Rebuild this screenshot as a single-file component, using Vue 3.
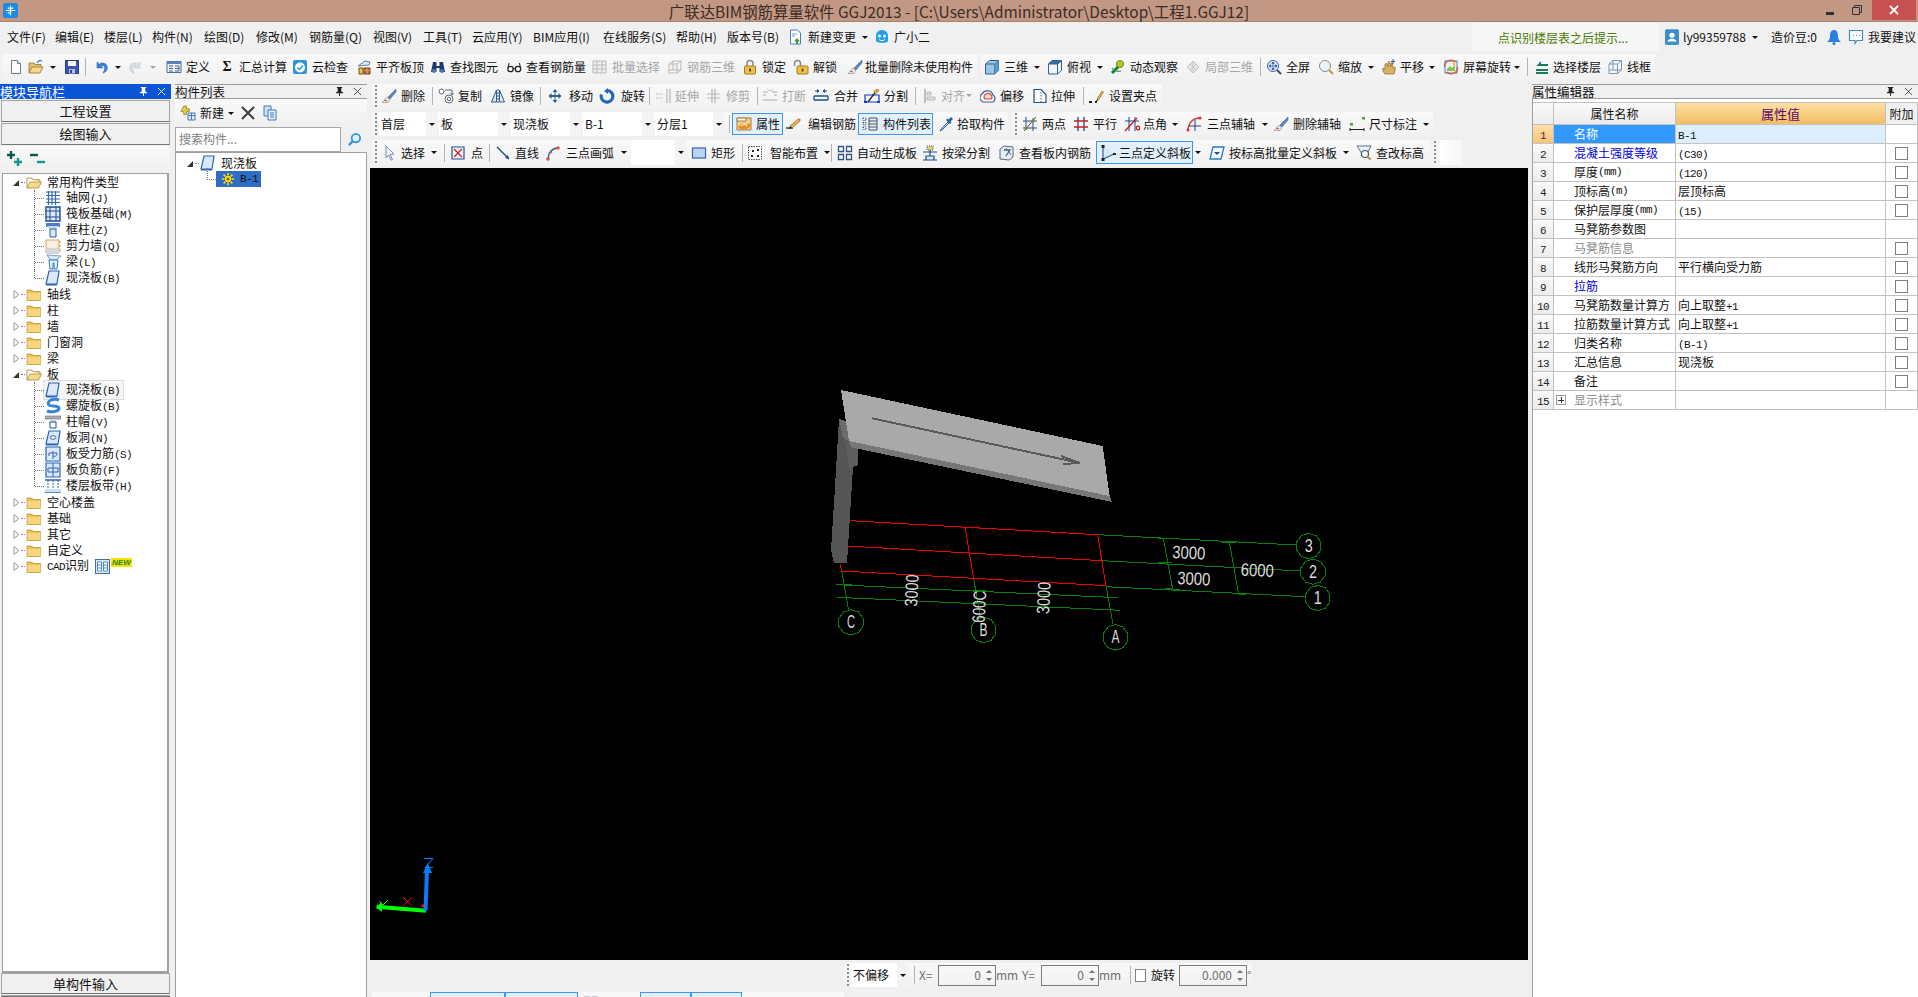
<script setup>
const folderBody = '<path d="M1 4h5l1 1.500h7.500v9H1z" fill="#f2c04e" stroke="#b08a3a" stroke-width=".7"/><path d="M1.500 7h13v7h-13z" fill="#f7d77e"/>'
const ic = {
  doc: '<path d="M3.500 1.500h6l3 3v10h-9z" fill="#fff" stroke="#6b7b90"/><path d="M9.500 1.500v3h3" fill="#dfe6ef" stroke="#6b7b90"/>',
  open: '<path d="M1 14V4h5l1 1.500h6V8" fill="#e8c26a" stroke="#a8864a"/><path d="M1 14l3-6h11l-3 6z" fill="#f6d88a" stroke="#a8864a"/><path d="M9 4c1-2 3-3 5-2" fill="none" stroke="#4a86c8" stroke-width="1.300"/>',
  save: '<path d="M1.500 1.500h13v13h-13z" fill="#3d55b0" stroke="#243a80"/><path d="M4 2h8v5H4z" fill="#f4f4f4"/><path d="M5 10h6v4.500H5z" fill="#b8c4dc"/><path d="M6 11h2v3H6z" fill="#34497a"/>',
  undo: '<path d="M4 3v6h6L8 7c3-1 4 1 3.500 3.500L10 14c4-1 5.500-5 3.500-8C12 3.500 8 3.500 6.500 5z" fill="#3a80d8" stroke="#2a62b0" stroke-width=".5"/>',
  redo: '<path d="M12 3v6H6l2-2c-3-1-4 1-3.500 3.500L6 14c-4-1-5.500-5-3.500-8C4 3.500 8 3.500 9.500 5z" fill="#d9dde2" stroke="#bcc2c9" stroke-width=".5"/>',
  calc: '<path d="M1 2.500h14v11H1z" fill="#eef3fa" stroke="#4a6a9a"/><path d="M1 2.500h14v2.500H1z" fill="#5c82bc"/><path d="M3 7h4M3 9.500h4M3 12h4M9 7h4v5H9M9 9.500h4" fill="none" stroke="#44608c"/>',
  cloud: '<rect x="1" y="1" width="14" height="14" rx="2" fill="#2f94dd"/><circle cx="8" cy="8.500" r="5" fill="#fff"/><path d="M5.500 8.500l2 2 3.500-4" fill="none" stroke="#2f94dd" stroke-width="1.500"/>',
  aligntop: '<path d="M2 7l7-5 5 1-1 3z" fill="#dfe6ef" stroke="#6a7f9a"/><path d="M3 9h4v6H3z" fill="#f3c638" stroke="#6a5214"/><path d="M8 9h6v6H8z" fill="#b86a3a" stroke="#7a3f1a"/><path d="M8 11.500h6M11 9v6" stroke="#e2b48a" stroke-width=".7"/>',
  bino: '<path d="M3 3h3.500v4H9.500V3H13l2 10h-5.500V9h-3v4H1z" fill="#1f3a6a"/><circle cx="4" cy="12" r="2" fill="#4a78ba"/><circle cx="12" cy="12" r="2" fill="#4a78ba"/>',
  glasses: '<circle cx="4.500" cy="10" r="2.700" fill="#fff" stroke="#222" stroke-width="1.300"/><circle cx="12" cy="10" r="2.700" fill="#fff" stroke="#222" stroke-width="1.300"/><path d="M2 9l1-5M14.500 9l-1-5M7 9.500h2.500" fill="none" stroke="#222"/>',
  gridg: '<path d="M1 2h13v12H1zM1 6h13M1 10h13M5 2v12M10 2v12" fill="#efefef" stroke="#b9b9b9"/>',
  rebar3: '<path d="M2 5l4-3h8v9l-4 3H2zM2 5h8v9M10 5l4-3M6 2v9H2M6 11h8" fill="none" stroke="#b9b9b9"/>',
  lock: '<path d="M5 7V4.500a3 3 0 0 1 6 0V7" fill="none" stroke="#8a8a8a" stroke-width="1.500"/><rect x="2.500" y="7" width="11" height="8" rx="1" fill="#ecc24e" stroke="#a37c1c"/><rect x="7" y="9.500" width="2" height="3" fill="#6d4c0a"/>',
  unlock: '<path d="M1.500 7V4.500a3 3 0 0 1 6 0V7" fill="none" stroke="#8a8a8a" stroke-width="1.500"/><rect x="4" y="7" width="11" height="8" rx="1" fill="#ecc24e" stroke="#a37c1c"/><rect x="8.500" y="9.500" width="2" height="3" fill="#6d4c0a"/>',
  brush: '<path d="M15 1L7 9l2 2 6-7z" fill="#5f86c6" stroke="#34568c" stroke-width=".5"/><path d="M6 9l3 3-2 2.500H1c2-1 2-3 5-5.500z" fill="#efe6d4" stroke="#888" stroke-width=".6"/><path d="M3 12l3 1" stroke="#c84a5a"/>',
  cube: '<path d="M1.500 5l4-3.500h9v10l-4 3.500h-9z" fill="#9cc6e8" stroke="#2e5f8e"/><path d="M1.500 5h9v10M10.500 5l4-3.500" fill="none" stroke="#2e5f8e"/><path d="M10.500 5l4-3.500v10l-4 3.500z" fill="#5e9bcf"/>',
  topv: '<path d="M1.500 5l4-3.500h9v10l-4 3.500h-9z" fill="#f1f5fb" stroke="#3c5f8c"/><path d="M1.500 5l4-3.500h9L10.500 5z" fill="#2f6db0" stroke="#3c5f8c"/><path d="M10.500 5v10M10.500 5l4-3.500" stroke="#3c5f8c"/>',
  orbit: '<circle cx="10" cy="5" r="3.500" fill="#b6cc22" stroke="#738400"/><path d="M8 8L2 14" stroke="#1e7a3c" stroke-width="3"/><path d="M2 9c2 3 6 4 9 3" fill="none" stroke="#28a050" stroke-width="1.200"/>',
  part3: '<path d="M2 8l6-6 6 6-6 6z" fill="#e6e6e6" stroke="#c2c2c2"/><path d="M5 5l6 6M11 5l-6 6M8 2v12" stroke="#c9c9c9"/>',
  full: '<circle cx="7" cy="7" r="5.500" fill="#d6e6f8" stroke="#4668a0"/><path d="M11 11l4 4" stroke="#3a4f78" stroke-width="2"/><path d="M7 3v8M3 7h8M7 3L5.800 4.500h2.400zM7 11l-1.200-1.500h2.400zM3 7l1.500-1.200v2.400zM11 7L9.500 5.800v2.400z" fill="#30508c" stroke="#30508c" stroke-width=".6"/>',
  zoom: '<circle cx="7" cy="7" r="5.500" fill="#eef2f6" stroke="#7f8c9c"/><path d="M11 11l4 4" stroke="#c89a30" stroke-width="2.200"/><path d="M3.500 6a4 4 0 0 1 4-3" fill="none" stroke="#fff" stroke-width="1.400"/>',
  pan: '<path d="M4 15c-2-2-3-5-2-6l2 1V5l1.500-.5L7 8V3l1.500-.5L10 8V4l1.500 0 .5 5 1.500-1 1 1-1.500 6z" fill="#d8b264" stroke="#8c6c2a" stroke-width=".7"/><path d="M12 0v5M10 2.500h4" stroke="#3c5a8c"/>',
  rot: '<rect x="2" y="2" width="12" height="12" fill="#e7f1fa" stroke="#4a82b8"/><path d="M4 10l3-3 2 2 3-3v6H4z" fill="#8cc04a"/><circle cx="11" cy="5" r="1.400" fill="#f0c230"/><path d="M1.500 8a6.500 6.500 0 0 1 11-5M14.500 8a6.500 6.500 0 0 1-11 5" fill="none" stroke="#e04a3a" stroke-width="1.300"/>',
  floors: '<path d="M2 7l5-4v2h7v2H2zM2 10h12v2H2zM2 13h12v2H2z" fill="#1c7a5e"/><path d="M5 5l2-2" stroke="#2e63b8" stroke-width="1.500"/>',
  wire: '<path d="M2 5l4-3.500h8.500v9.500l-4 3.500H2zM2 5h8.500v9.500M10.500 5l4-3.500M6 1.500V11H2M6 11h8.500" fill="#f7f9fc" fill-opacity=".6" stroke="#7f96ae"/>',
  copy: '<circle cx="3.500" cy="3.500" r="2.500" fill="#fff" stroke="#5f6a78"/><circle cx="11" cy="11" r="4" fill="#fff" stroke="#5f6a78"/><circle cx="11" cy="11" r="1.800" fill="none" stroke="#5f6a78"/><path d="M7 2h7v5M14 7l-1.500-2M14 7l1.500-2" fill="none" stroke="#5f6a78"/>',
  mirror: '<path d="M6.500 2L1.500 14h5zM9.500 2l5 12h-5z" fill="#dbe7f4" stroke="#33588c"/><path d="M8 1v14" stroke="#33588c" stroke-dasharray="2 1"/>',
  move: '<path d="M8 1l2.500 3h-2v3h3V5l3 3-3 3V9h-3v3h2L8 15l-2.500-3h2V9h-3v2l-3-3 3-3v2h3V4h-2z" fill="#2a5f96"/>',
  spin: '<path d="M8 2.500a5.800 5.800 0 1 1-5.500 4" fill="none" stroke="#2668c0" stroke-width="3.200"/><path d="M9 0v6L5 3z" fill="#2668c0"/>',
  extend: '<path d="M1 6h7M1 10h7" stroke="#bbb" stroke-dasharray="2 1"/><path d="M12 1v14M15 1v14" stroke="#bbb" stroke-width="1.300"/>',
  trim: '<path d="M1 6h13M1 10h13" stroke="#bbb"/><path d="M6 1v14M9 1v14" stroke="#bbb" stroke-width="1.300"/>',
  brk: '<path d="M1 4h5M1 7h3M10 4h5M12 7h3M1 12h14" stroke="#c4c4c4" stroke-width="1.300"/><path d="M5 1l3 2 3-2" fill="none" stroke="#c4c4c4"/>',
  merge: '<path d="M1 8h14M1 12h14M1 8v4M15 8v4" fill="none" stroke="#1f4f8a" stroke-width="1.300"/><path d="M2 3h4M10 3h4M6 3L4.500 1.500V4.500zM10 3l1.500-1.500V4.500z" fill="#1f4f8a" stroke="#1f4f8a"/>',
  split: '<path d="M1 7h14v7H1z" fill="none" stroke="#1438c8" stroke-width="1.200"/><path d="M4 14l9-12" stroke="#222" stroke-width="1.300"/><path d="M10 3l4-2 1 2-4 3z" fill="#e3b040" stroke="#7a5c14" stroke-width=".5"/><path d="M0 13h3v2H0zM13 13h3v2h-3z" fill="#1438c8"/>',
  align: '<path d="M2 1v14" stroke="#aaa" stroke-width="1.500"/><path d="M4 4h4v3H4zM4 9h8v3H4z" fill="#ddd" stroke="#bbb"/>',
  offset: '<path d="M3 14a4.500 4.500 0 0 1-1-8 6 6 0 0 1 11 1 4 4 0 0 1 0 7z" fill="#fff" stroke="#3a5f92" stroke-width="1.200"/><path d="M5 11a3 3 0 0 1 1-5 3.500 3.500 0 0 1 5 1 2.500 2.500 0 0 1 0 4z" fill="#f6d8cc" stroke="#d04a3a" stroke-width="1.200"/>',
  stretch: '<path d="M2 1.500h7l5 5v8H2z" fill="#fff" stroke="#1f4f8a" stroke-width="1.200"/><path d="M9 4v10" stroke="#555" stroke-dasharray="1.500 1.500"/>',
  grips: '<path d="M1 13h3v2H1zM7 13h2v2H7z" fill="#222"/><path d="M9 11l5-8 1.500 1-5 8z" fill="#e8b048" stroke="#7a5c14" stroke-width=".6"/><path d="M10 12l-2 1" stroke="#222"/>',
  prop: '<path d="M1 2h14v12H1z" fill="#f5d08a" stroke="#a8793a"/><path d="M1 2h9v3H1z" fill="#fff" stroke="#a8793a"/><path d="M2 11l5-4 3 2 4-2v4l-3 2H4z" fill="#e88c20"/><path d="M5 10l3-2 3 2" fill="none" stroke="#fff"/>',
  edit: '<path d="M0 12h7" stroke="#222" stroke-width="1.300"/><path d="M4 10l8-7 2 2-8 7z" fill="#eeb050" stroke="#806020" stroke-width=".6"/><path d="M12 3l2 2 1-1-2-2z" fill="#e6707a"/><path d="M4 10l-1 3 3-1" fill="#222"/>',
  list: '<path d="M1 2h3v2.500H1zM1 6.500h3V9H1zM1 11h3v2.500H1z" fill="none" stroke="#444" stroke-dasharray="1 1"/><path d="M7 2h8v12H7zM7 5h8M7 8h8M7 11h8" fill="none" stroke="#555"/>',
  pick: '<path d="M10 6l-6 6-2 3 3-2 6-6z" fill="#cfe4f8" stroke="#2a5f96"/><path d="M8 4l4 4 1.500-1.500-1-1L15 3l-2-2-2.500 2.500-1-1z" fill="#2460a8"/>',
  two: '<path d="M4 1v13M11 2v13M1 5h14M1 12h14" stroke="#2a4a8c"/><path d="M2 15L14 1" stroke="#c81e1e"/><circle cx="4" cy="12" r="1.600" fill="#4aa02c"/><circle cx="11" cy="5" r="1.600" fill="#4aa02c"/>',
  para: '<path d="M5 1v14M11 1v14" stroke="#25408c" stroke-width="1.300"/><path d="M1 5h14M1 11h14" stroke="#c81e1e" stroke-width="1.300"/>',
  angle: '<path d="M5 1v14M11 1v14M1 5h14" stroke="#25408c"/><path d="M1 15L13 2" stroke="#c81e1e" stroke-width="1.300"/><circle cx="14" cy="12" r="1.800" fill="none" stroke="#c81e1e" stroke-width="1.300"/>',
  arcax: '<path d="M2 15C2 7 7 2 14 2" fill="none" stroke="#d8312c" stroke-width="1.300"/><path d="M9 4v11M3 10h12" stroke="#25408c"/><circle cx="2" cy="14" r="1.500" fill="#d8312c"/><circle cx="14" cy="2" r="1.500" fill="#d8312c"/>',
  dim: '<path d="M1 7h3v2.500H1zM13 1h3v2.500h-3z" fill="#47a83a"/><path d="M1 12v3M15 12v3M1 13.500h14" stroke="#222"/>',
  cursor: '<path d="M5 1l8 8-4 .5 2.500 5-1.500.7L7.500 10 5 13z" fill="#f4f7fb" stroke="#7c8ca4"/>',
  point: '<path d="M2 2h12v12H2z" fill="#f0f4fb" stroke="#2a4f8c" stroke-width="1.200"/><path d="M4 4l8 8M12 4l-8 8" stroke="#c81e1e" stroke-width="1.200"/>',
  line: '<path d="M2 2l12 12" stroke="#1f4f8a" stroke-width="1.400"/><path d="M14 14l-4-1 3-3z" fill="#1f4f8a"/>',
  arc: '<path d="M3 14C3 8 7 3 13 3" fill="none" stroke="#2a5f96" stroke-width="1.400"/><circle cx="3" cy="14" r="1.800" fill="#d8553c"/><circle cx="13" cy="3" r="1.800" fill="#d8553c"/><circle cx="6" cy="7" r="1.200" fill="#d8553c"/>',
  rect: '<rect x="1.500" y="3" width="13" height="10" fill="#bcd4f4" stroke="#3a64a8" stroke-width="1.200"/>',
  smart: '<path d="M1.500 1.500h13v13h-13z" fill="#fff" stroke="#555" stroke-dasharray="1.500 1"/><path d="M5 5h2v2H5zM10 4h2v2h-2zM4 10h2v2H4zM10 10h2v2h-2z" fill="#222"/>',
  auto: '<path d="M1.500 1.500h5v5h-5zM9.500 1.500h5v5h-5zM1.500 9.500h5v5h-5zM9.500 9.500h5v5h-5z" fill="#fff" stroke="#34507c" stroke-width="1.300"/>',
  beam: '<path d="M5 1h6v4H5z" fill="#f3d25e" stroke="#2a5f96" stroke-dasharray="1 1"/><path d="M1 7h14M8 5v6M1 15h14M4 11h8v4H4z" fill="#dbe8f8" stroke="#1f4f8a" stroke-width="1.200"/>',
  view: '<path d="M1 4l4-3 9 1v10l-4 3-9-1z" fill="#e8edf2" stroke="#56687c"/><path d="M5 5l6 0-4 6" fill="none" stroke="#3a6a8c" stroke-width="1.300"/><path d="M7 3l5 7" stroke="#56687c"/>',
  three: '<path d="M3 1v13l11-5z" fill="#dbe8f8"/><path d="M3 1v13l11-5" fill="none" stroke="#2a64a8" stroke-width="1.200"/><path d="M1.500 0h3v3h-3zM1.500 13h3v3h-3zM13 8h3v2h-3z" fill="#222"/>',
  batch: '<path d="M4 2h11l-3 12H1z" fill="#f1f7fd" stroke="#2a7bc4" stroke-width="1.300"/><path d="M5 7h6L8 10z" fill="#1f4f8a"/>',
  chk: '<path d="M1 1h14l-4 8H6z" fill="#eaf0f6" stroke="#5f7488"/><circle cx="9" cy="9" r="3.500" fill="#f4f7fb" stroke="#46586c" stroke-width="1.200"/><path d="M11.500 11.500l3 3" stroke="#c88a28" stroke-width="2"/>',
  newc: '<path d="M2.500 1h7l3 3v11h-10z" fill="#fff" stroke="#4c7cb8"/><path d="M9 9l-3 3.500h2V15h2v-2.500h2z" fill="#3aa02c"/><path d="M4 5h5M4 7h3" stroke="#7aa0cc"/>',
  guang: '<path d="M8 1c4 0 6 3 6 6v5c-1 2-2 .5-3 2-1-1.500-2 .5-3 0-1 .5-2-1.500-3 0-1-1.500-2 0-3-2V7c0-3 2-6 6-6z" fill="#24a0e8"/><circle cx="5.500" cy="7" r="1.500" fill="#fff"/><circle cx="10.500" cy="7" r="1.500" fill="#fff"/><path d="M5 10.500c2 1.500 4 1.500 6 0" fill="none" stroke="#fff"/>',
  user: '<rect x="0" y="0" width="16" height="18" rx="2" fill="#3d8fc8"/><circle cx="8" cy="7" r="3" fill="#fff"/><path d="M3 14c0-4 10-4 10 0z" fill="#fff"/>',
  bell: '<path d="M8 1c3 0 4 3 4 6 0 3 1 4 3 6H1c2-2 3-3 3-6 0-3 1-6 4-6z" fill="#2a7fe0"/><circle cx="8" cy="14.500" r="1.500" fill="#2a7fe0"/>',
  chat: '<path d="M1.500 1.500h13v10H9l-2 3v-3H1.500z" fill="#fff" stroke="#3a8ad0" stroke-width="1.200"/><path d="M5 6.500h1M8 6.500h1M11 6.500h1" stroke="#3a8ad0"/>',
  newlist: '<path d="M1 0h4v4h4v4H5v4H1V8H-3z" transform="translate(3 1) scale(.7)" fill="#e8c84a" stroke="#8a7a20"/><path d="M8 8h7v7H8z" fill="#e6effa" stroke="#3d7ac0"/><path d="M8 10.500h7M11.500 8v7" stroke="#3d7ac0"/>',
  cross: '<path d="M2 2l12 12M14 2L2 14" stroke="#3c3c3c" stroke-width="2"/>',
  clone: '<path d="M2 1h7v10H2z" fill="#cfe0f4" stroke="#3d7ac0"/><path d="M6 5h8v10H6z" fill="#e8f0fb" stroke="#3d7ac0"/><path d="M8 8h4M8 10h4M8 12h4" stroke="#3d7ac0"/>',
  folderO: '<path d="M1 4h5l1 1.500h7V8" fill="#e9d49a" stroke="#b09a60" stroke-width=".8"/><path d="M1 14V4" stroke="#b09a60"/><path d="M1 14l3-6h11.500L12.500 14z" fill="#f7dc88" stroke="#a88a3c" stroke-width=".8"/>',
  folderC: folderBody,
  axnet: '<path d="M1 2h14M1 5.500h14M1 9h14M1 12.500h14M3.500 1v14M7 1v14M10.500 1v14" stroke="#3268b4" stroke-width="1.200"/>',
  raft: '<path d="M1 1h14v14H1z" fill="#dbe8f8" stroke="#1f4f8a" stroke-width="1.400"/><path d="M5 1v14M11 1v14M1 5h14M1 11h14" stroke="#1f4f8a"/>',
  col: '<path d="M1 1h14v4H1z" fill="#4f7cc2"/><path d="M2 4h12L11 8H5z" fill="#c8d8ee"/><path d="M5 7h6v8H5z" fill="#dce8f8" stroke="#2a5f96"/>',
  shear: '<path d="M1 2h13v13H1z" fill="#fbeee2" stroke="#d89a6a"/><path d="M1 15V10c3-1 7 1 13-1v6z" fill="#d7d7d7"/><path d="M14 4h2M14 8h2M14 12h2" stroke="#d88a4a"/>',
  beamt: '<path d="M2 1l14 1-5 4H5z" fill="#dbe8f8" stroke="#7aa0cc"/><path d="M4 6h9l-1 9H9V9H8v6H5z" fill="#e6f0fc" stroke="#2a78b8"/>',
  slab: '<path d="M4 1h10l-2 13H1z" fill="#dbe8fa" stroke="#2a64b4" stroke-width="1.200"/><path d="M1 14h11v1.500H1z" fill="#2a64b4"/>',
  spiral: '<path d="M14 2C8 0 1 3 4 7c2 2 9 0 10 3 .5 3-7 5-12 3" fill="none" stroke="#3a82d8" stroke-width="3"/>',
  cap: '<path d="M0 2h16v3H0z" fill="#aab0b8" stroke="#666" stroke-width=".6"/><path d="M4 5h8l-2 3H6z" fill="#cfd6de"/><path d="M5 8h6v6H5z" fill="#fff" stroke="#1f4f8a"/>',
  hole: '<path d="M4 1h11l-2 13H1z" fill="#dbe8fa" stroke="#2a64b4" stroke-width="1.200"/><ellipse cx="8" cy="7.500" rx="2.800" ry="1.800" fill="#fff" stroke="#2a64b4"/><path d="M1 14h12v1.500H1z" fill="#2a64b4"/>',
  rs: '<path d="M1 1h14v14H1z" fill="#dbe8fa" stroke="#2a64b4" stroke-width="1.200"/><path d="M4 7h8M8 5v8M4 7v3M12 7c0 3-2 4-4 3" fill="none" stroke="#2a64b4"/>',
  rf: '<path d="M1 1h14v14H1z" fill="#dbe8fa" stroke="#2a64b4" stroke-width="1.200"/><path d="M3 6h10v4H3zM8 1v14" fill="none" stroke="#2a64b4"/>',
  band: '<path d="M0 2h16M0 14h16" stroke="#2a64b4" stroke-width="1.500"/><path d="M3 2v12M8 2v12M13 2v12" stroke="#2a64b4" stroke-dasharray="2 1"/><path d="M0 11h16v3H0z" fill="#cfe0f6"/>',
  gear: '<circle cx="8" cy="8" r="4.500" fill="#f2e030" stroke="#3a3a10"/><circle cx="8" cy="8" r="1.800" fill="#7a6a10"/><path d="M8 1v3M8 12v3M1 8h3M12 8h3M3 3l2 2M11 11l2 2M13 3l-2 2M5 11l-2 2" stroke="#f2e030" stroke-width="1.800"/>',
  plus: '<path d="M4 0v8M0 4h8" stroke="#0a5a50" stroke-width="2.400"/><path d="M11 7v8M7 11h8" stroke="#12988a" stroke-width="2.400"/>',
  minus: '<path d="M0 4h8" stroke="#0a5a50" stroke-width="2.400"/><path d="M7 11h8" stroke="#12988a" stroke-width="2.400"/>'
}

const it = (i, t, w, o = {}) => ({ i, t, w, ...o })
const sep = (w) => ({ sep: true, w })
const grip = (w) => ({ grip: true, w })
const gap = (w) => ({ w })
const combo = (t, w, o = {}) => ({ combo: true, t, w, ...o })
const A = { a: 1 }
const D = { d: 1 }

const menus = [['文件(F)', 48], ['编辑(E)', 49], ['楼层(L)', 48], ['构件(N)', 52], ['绘图(D)', 52], ['修改(M)', 53], ['钢筋量(Q)', 64], ['视图(V)', 50], ['工具(T)', 49], ['云应用(Y)', 61], ['BIM应用(I)', 70], ['在线服务(S)', 73], ['帮助(H)', 51], ['版本号(B)', 61]]

const tbMain = [
  { x: 'g1', items: [it('doc', '', 20), it('open', '', 36, A), it('save', '', 18), sep(11), it('undo', '', 35, A), it('redo', '', 33, { a: 1, d: 1 })] },
  { x: 'g2', items: [it('calc', '定义', 53), { sig: 1, t: '汇总计算', w: 73 }, it('cloud', '云检查', 64), it('aligntop', '平齐板顶', 74), it('bino', '查找图元', 76), it('glasses', '查看钢筋量', 86), it('gridg', '批量选择', 75, D), it('rebar3', '钢筋三维', 75, D), it('lock', '锁定', 51), it('unlock', '解锁', 54), it('brush', '批量删除未使用构件', 130, { g: 2 })] },
  { x: 'g3', items: [it('cube', '三维', 63, A), it('topv', '俯视', 63, A), it('orbit', '动态观察', 75), it('part3', '局部三维', 72, D), sep(9), it('full', '全屏', 52), it('zoom', '缩放', 63, A), it('pan', '平移', 62, { a: 1, g: 3 }), it('rot', '屏幕旋转', 81, { a: 1, s: 1 }), sep(10), it('floors', '选择楼层', 73, { g: 3 }), it('wire', '线框', 48)] }
]

const row2 = [grip(6), it('brush', '删除', 48), sep(9), it('copy', '复制', 52), it('mirror', '镜像', 47), sep(10), it('move', '移动', 52, { g: 6 }), it('spin', '旋转', 47, { g: 6 }), sep(9), it('extend', '延伸', 51, D), it('trim', '修剪', 48, D), sep(8), it('brk', '打断', 51, D), it('merge', '合并', 51, { g: 5 }), it('split', '分割', 48), sep(11), it('align', '对齐', 57, { a: 1, d: 1, s: 1, g: 2 }), it('offset', '偏移', 52), it('stretch', '拉伸', 48, { g: 3 }), sep(8), it('grips', '设置夹点', 74, { g: 5 })]
const row3a = [grip(4), combo('首层', 58), combo('板', 70), combo('现浇板', 70), combo('B-1', 70), combo('分层1', 69), sep(6), it('prop', '属性', 51, { on: 1 }), gap(3), it('edit', '编辑钢筋', 72, { g: 6 }), it('list', '构件列表', 75, { on: 1, g: 5 }), gap(5), it('pick', '拾取构件', 70, { g: 3 })]
const row3b = [grip(7), it('two', '两点', 51), it('para', '平行', 51), it('angle', '点角', 62, { a: 1, g: 3 }), it('arcax', '三点辅轴', 87, { a: 1, g: 5 }), it('brush', '删除辅轴', 76), it('dim', '尺寸标注', 84, A)]
const row4 = [grip(6), it('cursor', '选择', 60, A), sep(9), it('point', '点', 36, { g: 5 }), sep(9), it('line', '直线', 50, { g: 4 }), it('arc', '三点画弧', 86, { a: 1, g: 5 }), combo('', 55), gap(5), it('rect', '矩形', 48), sep(8), it('smart', '智能布置', 81, { a: 1, g: 7, s: 1 }), sep(9), it('auto', '自动生成板', 85), it('beam', '按梁分割', 77), it('view', '查看板内钢筋', 97), it('three', '三点定义斜板', 97, { on: 1, g: 3 }), it('', '', 16, A), it('batch', '按标高批量定义斜板', 147, A), it('chk', '查改标高', 74)]
const clipped = [it('calc', '', 58), it('', '', 75, { on: 1 }), it('', '', 73, { on: 1 }), gap(5), it('auto', '', 57), it('', '', 51, { on: 1 }), it('', '', 51, { on: 1 }), it('move', '', 60)]

const runs = (s) => (s.match(/[\x20-\x7e]+|[^\x20-\x7e]+/g) || []).map((p) => ({ s: p, a: /^[\x20-\x7e]/.test(p) }))

const tree = [
  { t: '常用构件类型', open: 1 },
  { t: '轴网(J)', i: 'axnet', c: 1 }, { t: '筏板基础(M)', i: 'raft', c: 1 }, { t: '框柱(Z)', i: 'col', c: 1 }, { t: '剪力墙(Q)', i: 'shear', c: 1 }, { t: '梁(L)', i: 'beamt', c: 1 }, { t: '现浇板(B)', i: 'slab', c: 1, last: 1 },
  { t: '轴线' }, { t: '柱' }, { t: '墙' }, { t: '门窗洞' }, { t: '梁' },
  { t: '板', open: 1 },
  { t: '现浇板(B)', i: 'slab', c: 1, sel: 1 }, { t: '螺旋板(B)', i: 'spiral', c: 1 }, { t: '柱帽(V)', i: 'cap', c: 1 }, { t: '板洞(N)', i: 'hole', c: 1 }, { t: '板受力筋(S)', i: 'rs', c: 1 }, { t: '板负筋(F)', i: 'rf', c: 1 }, { t: '楼层板带(H)', i: 'band', c: 1, last: 1 },
  { t: '空心楼盖' }, { t: '基础' }, { t: '其它' }, { t: '自定义' }, { t: 'CAD识别', cad: 1 }
]

const props = [
  { n: '名称', v: 'B-1', sel: 1, nc: 1 },
  { n: '混凝土强度等级', v: '(C30)', k: 'link' },
  { n: '厚度(mm)', v: '(120)' },
  { n: '顶标高(m)', v: '层顶标高' },
  { n: '保护层厚度(mm)', v: '(15)' },
  { n: '马凳筋参数图', v: '', nc: 1 },
  { n: '马凳筋信息', v: '', k: 'mute' },
  { n: '线形马凳筋方向', v: '平行横向受力筋' },
  { n: '拉筋', v: '', k: 'link' },
  { n: '马凳筋数量计算方', v: '向上取整+1' },
  { n: '拉筋数量计算方式', v: '向上取整+1' },
  { n: '归类名称', v: '(B-1)' },
  { n: '汇总信息', v: '现浇板' },
  { n: '备注', v: '' },
  { n: '显示样式', v: '', k: 'mute', nc: 1, plus: 1 }
]

const green = [
  [1097.6, 534.7, 1295.6, 545], [1102, 560.7, 1300.8, 571], [1106, 586.7, 1305, 596.7],
  [1163.4, 538.3, 1172.7, 589.3], [1229.5, 542.7, 1238.4, 593.3],
  [835.8, 584.7, 1117.6, 597.7], [836.9, 597.3, 1120, 610.3],
  [841.7, 571, 848.6, 610], [973.6, 578.3, 980.5, 618.3], [1106, 585.7, 1113, 624],
  [1158, 538, 1170, 539], [1222, 542, 1236, 543], [1158, 562, 1172, 563], [1165, 588, 1180, 590], [1232, 593, 1246, 595],
  [966, 590, 986, 591], [845, 584, 852, 584], [845, 597, 852, 597]
]
const red = [
  [850.6, 520.7, 1097.6, 534.7], [847, 546, 1102, 560.7], [841.7, 571, 1106, 585.7],
  [840, 564, 841.7, 571], [965, 527.3, 973.6, 578.3], [1097.6, 534.7, 1106, 585.7]
]
const poly = (x, y) => Array.from({ length: 10 }, (_, n) => {
  const a = (n * Math.PI) / 5 + Math.PI / 10
  return `${(x + 12.7 * Math.cos(a)).toFixed(1)},${(y + 12.7 * Math.sin(a)).toFixed(1)}`
}).join(' ')
const bubbles = [['C', 851, 622.3], ['B', 983.6, 630], ['A', 1115.5, 637.3], ['3', 1308.7, 546], ['2', 1313, 571.7], ['1', 1317.7, 598]]
const dimH = [[1172, 558, 3], [1177, 584, 3], [1240.500, 575.500, 3]]
const dimV = [[917, 606.700, '3000'], [1049, 614.300, '3000'], [984.500, 623, '600C']]
</script>

<template>
  <div class="app">
    <header class="title">
      <svg class="logo" viewBox="0 0 16 16"><rect width="16" height="16" rx="2.500" fill="#1c8be6" /><path d="M8 3v10M3 8h10M5 5.500h6M5 10.500h2" stroke="#fff" stroke-width="1.300" fill="none" /></svg>
      <span class="title-text">广联达BIM钢筋算量软件 GGJ2013 - [C:\Users\Administrator\Desktop\工程1.GGJ12]</span>
      <div class="win">
        <i class="w-min"></i>
        <svg class="w-max" viewBox="0 0 10 10"><path d="M.500 2.500h7v7h-7zM2.500 2.500v-2h7v7h-2" fill="none" stroke="#333" /></svg>
        <div class="w-close"><svg viewBox="0 0 10 10"><path d="M1 1l8 8M9 1l-8 8" stroke="#fff" stroke-width="1.800" /></svg></div>
      </div>
    </header>

    <nav class="menu">
      <span v-for="m in menus" :key="m[0]" class="mi" :style="{ width: m[1] + 'px' }">{{ m[0] }}</span>
      <div class="it" :style="{ width: '86px' }"><svg class="ic" viewBox="0 0 16 16" v-html="ic.newc"></svg><span class="tx">新建变更</span><i class="ar"></i></div>
      <div class="it" :style="{ width: '60px' }"><svg class="ic" viewBox="0 0 16 16" v-html="ic.guang"></svg><span class="tx">广小二</span></div>
      <div class="menu-right">
        <div class="hint">点识别楼层表之后提示...</div>
        <div class="it user" :style="{ width: '106px' }"><svg class="ic tall" viewBox="0 0 16 18" v-html="ic.user"></svg><span class="tx">ly99359788</span><i class="ar"></i></div>
        <span class="mi" :style="{ width: '55px' }">造价豆:0</span>
        <div class="it" :style="{ width: '22px' }"><svg class="ic" viewBox="0 0 16 16" v-html="ic.bell"></svg></div>
        <div class="it" :style="{ width: '70px' }"><svg class="ic" viewBox="0 0 16 16" v-html="ic.chat"></svg><span class="tx">我要建议</span></div>
      </div>
    </nav>

    <div class="mainbar">
      <div v-for="g in tbMain" :key="g.x" class="grp" :class="g.x">
        <template v-for="(b, n) in g.items" :key="n">
          <div v-if="b.sep" class="sep" :style="{ width: b.w + 'px' }"><i></i></div>
          <div v-else class="it" :class="{ dis: b.d }" :style="{ width: b.w + 'px', gap: (b.g || 4) + 'px' }">
            <b v-if="b.sig" class="sigma">Σ</b>
            <svg v-else-if="b.i" class="ic" viewBox="0 0 16 16" v-html="ic[b.i]"></svg>
            <span v-if="b.t" class="tx">{{ b.t }}</span><i v-if="b.a" class="ar" :class="{ near: b.s }"></i>
          </div>
        </template>
      </div>
    </div>

    <div class="body">
      <aside class="nav">
        <div class="phead blue"><span>模块导航栏</span>
          <svg class="pin" viewBox="0 0 10 12"><path d="M2 1h6v1H7v4l2 1v1H5.500v3h-1V8H1V7l2-1V2H2z" fill="#fff" /></svg>
          <svg class="px" viewBox="0 0 10 10"><path d="M1 1l8 8M9 1l-8 8" stroke="#fff" /></svg>
        </div>
        <button class="nbtn">工程设置</button>
        <button class="nbtn">绘图输入</button>
        <div class="expand">
          <svg class="pm" viewBox="0 0 16 16" v-html="ic.plus"></svg>
          <svg class="pm" viewBox="0 0 16 16" v-html="ic.minus"></svg>
        </div>
        <div class="treebox">
          <div v-for="(r, n) in tree" :key="n" class="tr" :class="{ child: r.c, last: r.last, sel: r.sel, root: !r.c }">
            <template v-if="!r.c">
              <svg class="exp" viewBox="0 0 7 9"><path v-if="r.open" d="M0 8l6-6v6z" fill="#333" /><path v-else d="M1 .5l5 4-5 4z" fill="#fff" stroke="#999" /></svg>
              <i class="dot"></i>
              <svg class="ic" viewBox="0 0 16 16" v-html="r.open ? ic.folderO : ic.folderC"></svg>
            </template>
            <svg v-else class="ic" viewBox="0 0 16 16" v-html="ic[r.i]"></svg>
            <span class="lab"><span v-for="(p, m) in runs(r.t)" :key="m" :class="{ asc: p.a }">{{ p.s }}</span></span>
            <template v-if="r.cad">
              <svg class="cad" viewBox="0 0 15 15"><rect x=".5" y=".5" width="14" height="14" fill="#dbe8fa" stroke="#4a6a9a" /><path d="M2.500 3h4v9h-4zM8.500 3h4v9h-4zM2.500 6h4M2.500 9h4M8.500 6h4M8.500 9h4" fill="#fff" stroke="#2a78c8" stroke-width=".8" /></svg>
              <b class="newb">NEW</b>
            </template>
          </div>
        </div>
        <button class="nbtn bottom">单构件输入</button>
        <button class="nbtn stub"></button>
      </aside>

      <section class="listp">
        <div class="phead grey"><span>构件列表</span>
          <svg class="pin" viewBox="0 0 10 12"><path d="M2 1h6v1H7v4l2 1v1H5.500v3h-1V8H1V7l2-1V2H2z" fill="#222" /></svg>
          <svg class="px" viewBox="0 0 10 10"><path d="M1 1l8 8M9 1l-8 8" stroke="#444" /></svg>
        </div>
        <div class="ltool">
          <div class="it" :style="{ width: '60px', gap: '4px' }"><svg class="ic" viewBox="0 0 16 16" v-html="ic.newlist"></svg><span class="tx">新建</span><i class="ar tight"></i></div>
          <div class="it" :style="{ width: '22px' }"><svg class="ic" viewBox="0 0 16 16" v-html="ic.cross"></svg></div>
          <div class="it" :style="{ width: '18px' }"><svg class="ic" viewBox="0 0 16 16" v-html="ic.clone"></svg></div>
        </div>
        <div class="search"><span class="sinput">搜索构件...</span>
          <div class="sbtn"><svg viewBox="0 0 16 16"><circle cx="9.500" cy="6.500" r="4.500" fill="#e2f0fc" stroke="#3a96e0" stroke-width="2" /><path d="M6 10l-4 4" stroke="#3a96e0" stroke-width="2.500" /></svg></div>
        </div>
        <div class="ltree">
          <div class="lroot">
            <svg class="exp" viewBox="0 0 7 9"><path d="M0 8l6-6v6z" fill="#333" /></svg>
            <i class="dot"></i>
            <svg class="ic" viewBox="0 0 16 16" v-html="ic.slab"></svg>
            <span class="lab">现浇板</span>
          </div>
          <div class="lchild">
            <div class="lsel"><svg class="ic small" viewBox="0 0 16 16" v-html="ic.gear"></svg><span class="asc">B-1</span></div>
          </div>
        </div>
      </section>

      <main class="center">
        <div class="tbrow r2">
          <div class="grp r2a">
            <template v-for="(b, n) in row2" :key="n">
              <div v-if="b.grip" class="grip" :style="{ width: b.w + 'px' }"></div>
              <div v-else-if="b.sep" class="sep" :style="{ width: b.w + 'px' }"><i></i></div>
              <div v-else class="it" :class="{ dis: b.d }" :style="{ width: b.w + 'px', gap: (b.g || 4) + 'px' }"><svg class="ic" viewBox="0 0 16 16" v-html="ic[b.i]"></svg><span class="tx">{{ b.t }}</span><i v-if="b.a" class="ar" :class="{ near: b.s }"></i></div>
            </template>
          </div>
        </div>
        <div class="tbrow r3">
          <div v-for="(rowItems, rn) in [row3a, row3b]" :key="rn" class="grp" :class="rn ? 'r3b' : 'r3a'">
            <template v-for="(b, n) in rowItems" :key="n">
              <div v-if="b.grip" class="grip" :style="{ width: b.w + 'px' }"></div>
              <div v-else-if="b.sep" class="sep" :style="{ width: b.w + 'px' }"><i></i></div>
              <div v-else-if="b.combo" class="combo" :style="{ width: b.w + 'px' }"><span class="ctx">{{ b.t }}</span><span class="cbtn"><i class="ar flat"></i></span></div>
              <div v-else class="it" :class="{ on: b.on }" :style="{ width: b.w + 'px', gap: (b.g || 4) + 'px' }"><svg v-if="b.i" class="ic" viewBox="0 0 16 16" v-html="ic[b.i]"></svg><span v-if="b.t" class="tx">{{ b.t }}</span><i v-if="b.a" class="ar"></i></div>
            </template>
          </div>
        </div>
        <div class="tbrow r4">
          <div class="grp r4a">
            <template v-for="(b, n) in row4" :key="n">
              <div v-if="b.grip" class="grip" :style="{ width: b.w + 'px' }"></div>
              <div v-else-if="b.sep" class="sep" :style="{ width: b.w + 'px' }"><i></i></div>
              <div v-else-if="b.combo" class="combo last" :style="{ width: b.w + 'px' }"><span class="ctx"></span><span class="cbtn"><i class="ar flat"></i></span></div>
              <div v-else class="it" :class="{ on: b.on }" :style="{ width: b.w + 'px', gap: (b.g || 4) + 'px' }"><svg v-if="b.i" class="ic" viewBox="0 0 16 16" v-html="ic[b.i]"></svg><span v-if="b.t" class="tx">{{ b.t }}</span><i v-if="b.a" class="ar" :class="{ near: b.s }"></i></div>
            </template>
          </div>
          <div class="grp stubgrp"><div class="grip"></div><span class="lite"></span></div>
        </div>

        <div class="viewport">
          <svg viewBox="370 168 1158 792" width="1158" height="792">
            <g shape-rendering="crispEdges">
              <polygon points="839,419 846,421 849,441 858,448 858,465 853,467 847,563 834,563 831,550 834,503" fill="#555" />
              <polygon points="839,419 846,421 849,441 843,438" fill="#6c6c6c" />
              <polygon points="845,440 858,448 858,465 853,467 850,470" fill="#5e5e5e" />
              <polygon points="841,390 1102.700,446 1109.600,496 849,441" fill="#a9a9a9" />
              <polygon points="849,441 1109.600,496 1112,502 851,447.300" fill="#777" />
              <path d="M872 418.300L1080 463M1061 456L1080 463L1063 464" fill="none" stroke="#5a5a5a" stroke-width="2" />
              <line v-for="(l, n) in green" :key="'g' + n" :x1="l[0]" :y1="l[1]" :x2="l[2]" :y2="l[3]" stroke="#0a800a" />
              <line v-for="(l, n) in red" :key="'r' + n" :x1="l[0]" :y1="l[1]" :x2="l[2]" :y2="l[3]" stroke="#f00000" />
              <polygon v-for="b in bubbles" :key="'p' + b[0]" :points="poly(b[1], b[2])" fill="none" stroke="#0a800a" />
            </g>
            <text v-for="b in bubbles" :key="b[0]" :x="b[1] - 4" :y="b[2] + 6" class="cad-t" textLength="8" lengthAdjust="spacingAndGlyphs">{{ b[0] }}</text>
            <text v-for="(d, n) in dimH" :key="'h' + n" :transform="`translate(${d[0]} ${d[1]}) rotate(${d[2]})`" class="cad-t" textLength="33" lengthAdjust="spacingAndGlyphs">{{ n === 2 ? '6000' : '3000' }}</text>
            <text v-for="(d, n) in dimV" :key="'v' + n" :transform="`translate(${d[0]} ${d[1]}) rotate(-87)`" class="cad-t" textLength="32" lengthAdjust="spacingAndGlyphs">{{ d[2] }}</text>
            <path d="M426 910.700L376.700 906.700" stroke="#00ff00" stroke-width="4" />
            <path d="M382 902L376 907L382 912z" fill="#00ff00" />
            <path d="M379 901l4 4 5-5" fill="none" stroke="#00ff00" />
            <path d="M403 897l9 9M412 897l-9 9" stroke="#ff0000" />
            <circle cx="423" cy="906" r="1.800" fill="#ff0000" />
            <path d="M425.500 910.700L427 870" stroke="#0a7aff" stroke-width="4" />
            <path d="M423 873L427.700 863L432 873z" fill="#0a7aff" />
            <path d="M424 858.500h9l-8 9h8" fill="none" stroke="#0a7aff" />
          </svg>
        </div>

        <div class="bottombar">
          <div class="grp offs">
            <div class="grip"></div>
            <div class="combo" :style="{ width: '57px' }"><span class="ctx">不偏移</span><span class="cbtn"><i class="ar flat"></i></span></div>
            <div class="sep" :style="{ width: '8px' }"><i></i></div>
            <span class="glab w20">X=</span>
            <div class="spin" :style="{ width: '58px' }"><span>0</span><em></em></div>
            <span class="glab w26">mm</span>
            <span class="glab w19">Y=</span>
            <div class="spin" :style="{ width: '58px' }"><span>0</span><em></em></div>
            <span class="glab w26">mm</span>
            <div class="sep" :style="{ width: '8px' }"><i></i></div>
            <i class="cbx"></i>
            <span class="tx rotl">旋转</span>
            <div class="spin" :style="{ width: '68px' }"><span>0.000</span><em></em></div>
            <span class="glab">°</span>
          </div>
        </div>
        <div class="clipbar">
          <div class="grp">
            <template v-for="(b, n) in clipped" :key="n">
              <div class="it" :class="{ on: b.on }" :style="{ width: b.w + 'px' }"><svg v-if="b.i" class="ic" viewBox="0 0 16 16" v-html="ic[b.i]"></svg></div>
            </template>
          </div>
        </div>
      </main>

      <aside class="props">
        <div class="phead grey"><span>属性编辑器</span>
          <svg class="pin" viewBox="0 0 10 12"><path d="M2 1h6v1H7v4l2 1v1H5.500v3h-1V8H1V7l2-1V2H2z" fill="#222" /></svg>
          <svg class="px" viewBox="0 0 10 10"><path d="M1 1l8 8M9 1l-8 8" stroke="#444" /></svg>
        </div>
        <div class="ptable">
          <div class="prow phd">
            <div class="c0"></div>
            <div class="c1h">属性名称</div>
            <div class="c2h">属性值</div>
            <div class="c3h">附加</div>
          </div>
          <div v-for="(p, n) in props" :key="n" class="prow" :class="{ sel: p.sel }">
            <div class="c0 num"><span class="asc">{{ n + 1 }}</span></div>
            <div class="c1" :class="p.k"><i v-if="p.plus" class="plusbox"></i><span v-for="(q, m) in runs(p.n)" :key="m" :class="{ asc: q.a }">{{ q.s }}</span></div>
            <div class="c2"><span v-for="(q, m) in runs(p.v)" :key="m" :class="{ asc: q.a }">{{ q.s }}</span></div>
            <div class="c3"><i v-if="!p.nc" class="cbx"></i></div>
          </div>
        </div>
      </aside>
    </div>
  </div>
</template>

<style scoped>
.app { width: 1918px; height: 997px; overflow: hidden; background: #f0f0f0; color: #111; font: 12px/16px "Noto Sans CJK SC", "Liberation Sans", sans-serif; display: flex; flex-direction: column; }
.asc { font-family: "Liberation Mono", monospace; font-size: 11px; letter-spacing: -.6px; }

.title { height: 22px; flex: none; box-sizing: border-box; background: #c29885; border-bottom: 1px solid #a38272; display: flex; align-items: center; justify-content: center; position: relative; }
.logo { position: absolute; left: 3px; top: 3px; width: 15px; height: 15px; }
.title-text { font-size: 15.400px; color: #3c2c24; white-space: nowrap; line-height: 20px; }
.win { position: absolute; right: 2px; top: 0; height: 20px; display: flex; align-items: center; }
.w-min { width: 8px; height: 3px; background: #333; margin: 7px 18px 0 0; }
.w-max { width: 10px; height: 10px; margin-right: 10px; }
.w-close { width: 44px; height: 20px; background: #c75050; display: flex; align-items: center; justify-content: center; }
.w-close svg { width: 10px; height: 10px; }

.menu { height: 30px; flex: none; padding-left: 7px; display: flex; align-items: center; }
.mi { flex: none; white-space: nowrap; }
.menu-right { margin-left: auto; display: flex; align-items: center; height: 30px; }
.hint { width: 187px; height: 28px; margin-right: 6px; background: #f6f6f6; color: #4a7a00; line-height: 30px; padding-left: 26px; box-sizing: border-box; border-radius: 2px; }
.ic.tall { height: 18px; width: 14px; }
.user { gap: 7px; }

.mainbar { height: 26px; flex: none; margin-top: 2px; padding-left: 2px; display: flex; }
.grp { display: flex; align-items: center; flex: none; background: linear-gradient(#f9f9f9, #f1f1f1); border-radius: 2px; box-sizing: border-box; }
.g1 { padding-left: 6px; width: 159px; }
.g2 { padding-left: 5px; width: 816px; }
.g3 { padding-left: 3px; margin-left: 4px; width: 674px; }

.it { display: flex; align-items: center; gap: 4px; height: 100%; flex: none; white-space: nowrap; box-sizing: border-box; }
.ic { width: 16px; height: 16px; flex: none; }
.ic.small { width: 14px; height: 14px; }
.tx { flex: none; color: #111; }
.dis .tx { color: #a6a6a6; }
.dis .ar { border-top-color: #a6a6a6; }
.ar { flex: none; width: 0; height: 0; margin-left: 2px; border-left: 3px solid transparent; border-right: 3px solid transparent; border-top: 3px solid #111; }
.ar.near { margin-left: -1px; }
.ar.tight { margin-left: 0; }
.ar.flat { margin-left: 0; }
.sigma { width: 16px; text-align: center; font: bold 14px/16px "Liberation Serif", serif; color: #111; }
.sep { flex: none; height: 100%; display: flex; align-items: center; }
.sep i { display: block; width: 1px; height: 18px; background: #b4b4b4; margin-left: 3px; }
.grip { flex: none; width: 4px; height: 100%; background: radial-gradient(circle at 1px 1px, #8d8d8d 1px, transparent 1.200px) 0 5px / 4px 4px repeat-y; }
.on { border: 1px solid #3c96ee; background: #e2f0fb; padding-left: 3px; }

.body { flex: 1; min-height: 0; margin-top: 4px; display: flex; }
.phead { height: 15px; flex: none; display: flex; align-items: center; font-size: 13px; line-height: 15px; box-sizing: border-box; white-space: nowrap; }
.phead span { flex: 1; }
.blue { background: #0a55d6; color: #fff; }
.grey { background: #f0f0f0; border-top: 1px solid #9b9b9b; border-bottom: 1px solid #9b9b9b; font-size: 12.500px; line-height: 13px; }
.pin { width: 9px; height: 11px; margin-right: 9px; flex: none; }
.px { width: 9px; height: 9px; margin-right: 5px; flex: none; }

.nav { width: 171px; flex: none; display: flex; flex-direction: column; }
.nbtn { flex: none; height: 22px; margin: 1px 1px 0; padding: 0; background: #f0f0f0; border: 1px solid #a4a4a4; border-bottom-color: #777; font: 13px/20px "Noto Sans CJK SC", sans-serif; color: #111; }
.nbtn.bottom { height: 21px; margin-top: 0; }
.nbtn.stub { height: 2px; }
.expand { height: 26px; flex: none; margin: 1px 1px 0; background: linear-gradient(#f9f9f9, #f0f0f0); display: flex; align-items: center; gap: 7px; padding-left: 6px; }
.pm { width: 16px; height: 16px; }
.treebox { flex: 1; min-height: 0; margin: 1px 2px 0 2px; box-sizing: border-box; border: 1px solid #a0a0a0; border-width: 1px 2px 2px 1px; background: #fff; padding-top: 0; }
.tr { height: 16px; position: relative; display: flex; align-items: center; white-space: nowrap; }
.root { padding-left: 10px; }
.child { padding-left: 42px; }
.exp { width: 7px; height: 9px; flex: none; }
.dot { width: 4px; height: 0; border-top: 1px dotted #888; margin: 0 1px; flex: none; }
.lab { margin-left: 5px; flex: none; }
.root .lab { margin-left: 5px; }
.child::before { content: ""; position: absolute; left: 31px; top: 0; height: 100%; border-left: 1px dotted #777; }
.child::after { content: ""; position: absolute; left: 32px; top: 8px; width: 9px; border-top: 1px dotted #777; }
.child.last::before { height: 8px; }
.child.sel::before { height: 100%; }
.tr.child .lab { position: relative; }
.tr.sel { z-index: 0; }
.tr.sel .lab::before { content: ""; position: absolute; left: -23px; right: -4px; top: -1px; bottom: -1px; background: #f6f6f6; border: 1px solid #dcdcdc; z-index: -1; }
.tr.sel .ic { position: relative; z-index: 1; }
.cad { width: 15px; height: 15px; margin-left: 6px; flex: none; }
.newb { position: relative; top: -4px; margin-left: 1px; background: #ffe100; color: #0c8a2c; font: italic bold 8px/9px "Liberation Sans", sans-serif; padding: 0 1px; }

.listp { width: 192px; flex: none; margin-left: 4px; display: flex; flex-direction: column; }
.ltool { height: 28px; flex: none; display: flex; align-items: center; padding-left: 5px; background: linear-gradient(#f9f9f9, #f0f0f0); }
.search { height: 25px; flex: none; display: flex; }
.sinput { width: 166px; flex: none; box-sizing: border-box; background: #fff; border: 1px solid #a8a8a8; color: #808080; font-size: 12px; line-height: 22px; padding-left: 3px; }
.sbtn { flex: 1; display: flex; align-items: center; justify-content: center; background: #f0f0f0; }
.sbtn svg { width: 15px; height: 15px; }
.ltree { flex: 1; min-height: 0; background: #fff; border: 1px solid #a0a0a0; border-width: 1px 1px 0; padding-top: 2px; position: relative; }
.lroot { height: 16px; display: flex; align-items: center; padding-left: 11px; }
.lchild { height: 17px; padding-left: 40px; position: relative; }
.lchild::before { content: ""; position: absolute; left: 31px; top: -3px; height: 11px; width: 8px; border-left: 1px dotted #777; border-bottom: 1px dotted #777; }
.lsel { width: 45px; height: 16px; background: #2f6cc6; display: flex; align-items: center; padding-left: 5px; gap: 5px; box-sizing: border-box; color: #111; }

.center { width: 1158px; flex: none; margin-left: 3px; display: flex; flex-direction: column; }
.tbrow { flex: none; display: flex; margin-left: 2px; }
.r2 { height: 25px; margin-bottom: 3px; }
.r3 { height: 24px; margin-bottom: 4px; }
.r4 { height: 25px; margin-bottom: 3px; }
.r2a { padding: 0 0 2px 3px; width: 790px; }
.r3a { padding-left: 3px; width: 636px; }
.r3b { padding-left: 3px; margin-left: 4px; width: 421px; }
.r4a { padding-left: 3px; width: 1058px; }
.r4 .on { height: 23px; }
.r3 .on { height: 22px; }
.stubgrp { margin-left: 1px; width: 31px; padding-left: 3px; background: #f4f4f4; }
.lite { width: 24px; height: 100%; margin-left: 2px; background: linear-gradient(90deg, #fff, #f6f6f6); }
.combo { flex: none; height: 100%; margin-right: 2px; display: flex; background: #fff; box-sizing: border-box; }
.combo.last { margin-right: 0; }
.ctx { flex: 1; line-height: 24px; padding-left: 2px; white-space: nowrap; }
.cbtn { width: 11px; background: #f3f3f3; display: flex; align-items: center; justify-content: center; flex: none; }

.viewport { height: 792px; flex: none; background: #000; }
.viewport svg { display: block; }
.cad-t { font: 18px "Liberation Sans", sans-serif; fill: #dcdcdc; }

.bottombar { height: 32px; flex: none; padding: 3px 0 0 474px; box-sizing: border-box; }
.offs { height: 24px; width: 408px; padding-left: 3px; }
.offs .combo { margin-right: 0; }
.offs .sep { margin-left: 3px; }
.glab { flex: none; color: #6e6e6e; white-space: nowrap; }
.w20 { width: 19px; }
.w26 { width: 25px; }
.w19 { width: 19px; margin-left: 1px; }
.spin { flex: none; height: 21px; box-sizing: border-box; border: 1px solid #7c7c7c; display: flex; align-items: center; justify-content: flex-end; position: relative; color: #6e6e6e; padding-right: 14px; }
.spin em { position: absolute; right: 3px; top: 4px; width: 0; height: 0; border-left: 3px solid transparent; border-right: 3px solid transparent; border-bottom: 3px solid #777; }
.spin::after { content: ""; position: absolute; right: 3px; bottom: 4px; width: 0; height: 0; border-left: 3px solid transparent; border-right: 3px solid transparent; border-top: 3px solid #777; }
.cbx { display: block; width: 11px; height: 13px; box-sizing: border-box; border: 1px solid #808080; background: #fff; flex: none; }
.rotl { margin: 0 4px 0 5px; }
.clipbar { height: 5px; flex: none; margin-left: 2px; overflow: hidden; }
.clipbar .grp { height: 24px; width: 472px; align-items: stretch; }

.props { flex: 1; min-width: 0; margin-left: 4px; display: flex; flex-direction: column; background: #fff; }
.props .phead { background: #f0f0f0; }
.ptable { flex: 1; border-left: 1px solid #a0a0a0; padding-top: 3px; background: #fff; }
.prow { height: 19px; display: grid; grid-template-columns: 21px 122px 210px 32px; box-sizing: border-box; border-bottom: 1px solid #c2c2c2; white-space: nowrap; }
.prow > div { border-right: 1px solid #c2c2c2; box-sizing: border-box; overflow: hidden; line-height: 18px; }
.phd { height: 23px; border-top: 1px solid #c2c2c2; }
.phd > div { text-align: center; line-height: 21px; }
.c0 { background: linear-gradient(#f9f9f9, #ececec); }
.c1h { background: linear-gradient(#fafafa, #ececec); }
.c2h { background: linear-gradient(#fddfa4, #f2be60); color: #5e0a72; font-size: 13px; }
.c3h { background: #f0f0f0; }
.num { text-align: center; color: #222; }
.c1 { padding-left: 20px; display: flex; align-items: center; position: relative; }
.c2 { padding-left: 2px; }
.c3 { display: flex; align-items: center; justify-content: center; }
.c3 .cbx { width: 13px; height: 13px; }
.link { color: #0000e6; }
.mute { color: #8c8c8c; }
.plusbox { position: absolute; left: 2px; top: 4px; width: 10px; height: 10px; border: 1px solid #999; box-sizing: border-box; background: linear-gradient(#333, #333) center / 6px 1px no-repeat, linear-gradient(#333, #333) center / 1px 6px no-repeat, #fff; }
.sel .c0 { background: linear-gradient(#fde0a8, #f6c678); color: #7a0a5a; }
.sel .c1 { background: #3399ff; color: #fff; }
.sel .c2 { background: #ddeeff; }
</style>

<style>
html, body { margin: 0; background: #f0f0f0; overflow: hidden; }
</style>
